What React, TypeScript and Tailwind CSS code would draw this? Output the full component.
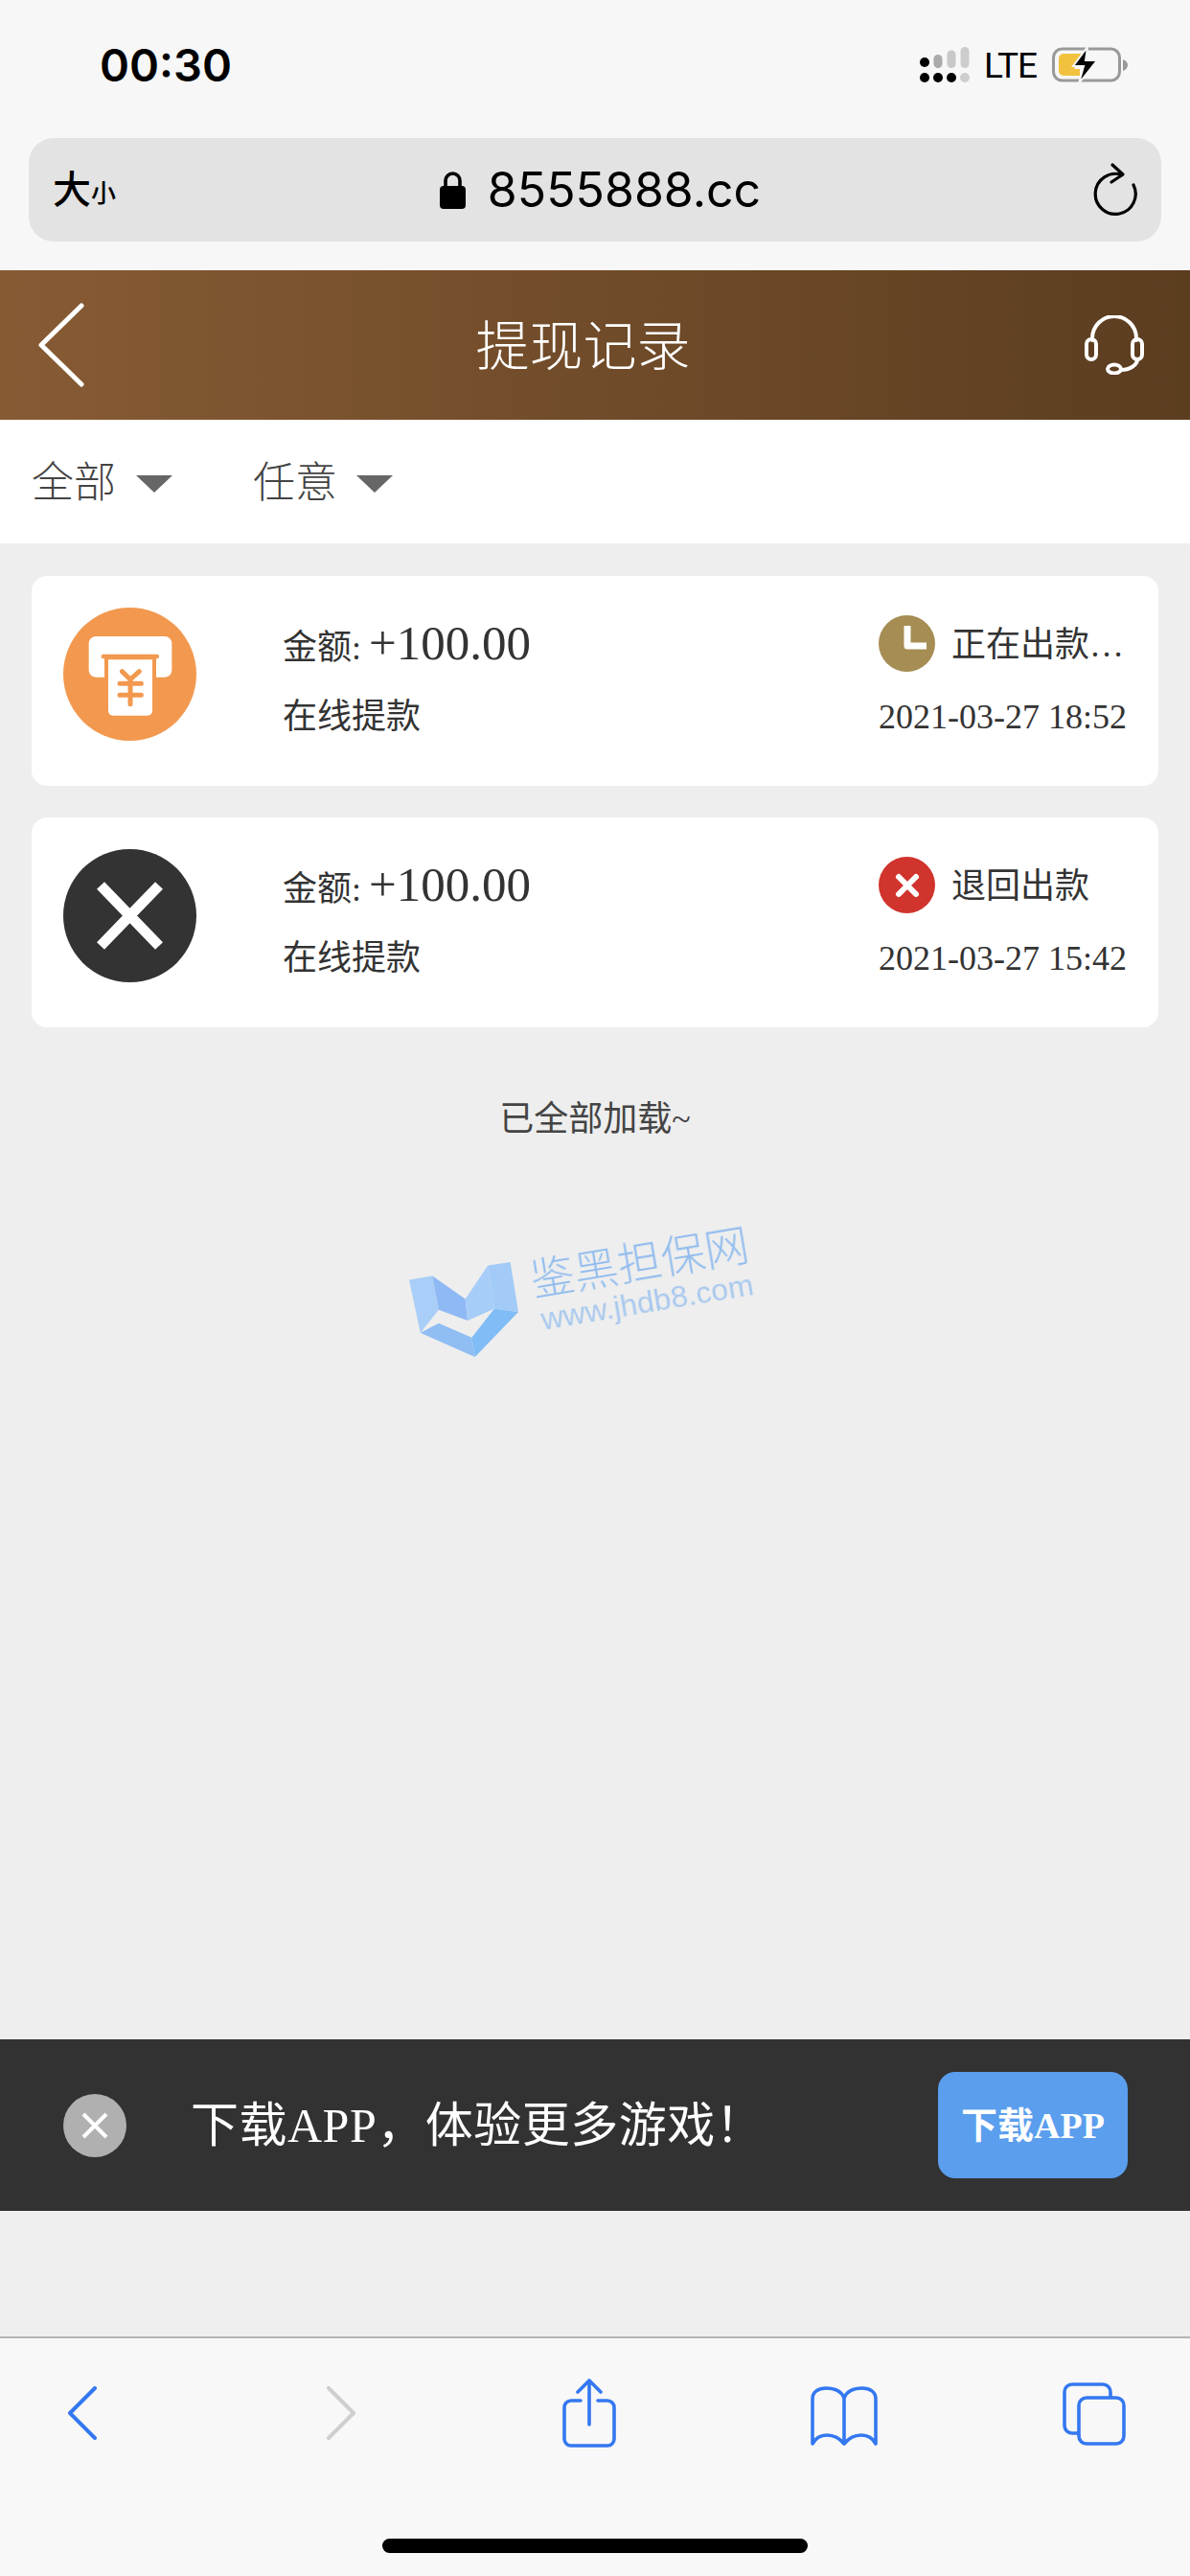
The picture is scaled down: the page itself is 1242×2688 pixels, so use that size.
const SERIF = "font-['Liberation_Serif','Noto_Sans_CJK_SC',serif]";

function SignalIcon() {
    return (
        <svg width="52" height="38" viewBox="0 0 52 38" className="block">
            <circle cx="5" cy="16" r="5" fill="#000" />
            <rect x="14.5" y="8" width="9" height="14" rx="4.5" fill="#aaa" />
            <rect x="28.5" y="3.5" width="9" height="18.5" rx="4.5" fill="#c8c8c8" />
            <rect x="42.5" y="0" width="9" height="22" rx="4.5" fill="#cdcdcd" />
            <circle cx="5" cy="32" r="5" fill="#000" />
            <circle cx="19" cy="32" r="5" fill="#000" />
            <circle cx="33" cy="32" r="5" fill="#000" />
            <circle cx="47" cy="32" r="5" fill="#cdcdcd" />
        </svg>
    );
}

function BatteryIcon() {
    return (
        <svg width="80" height="38" viewBox="0 0 80 38" className="block">
            <rect x="1.5" y="2" width="69" height="33" rx="9" fill="none" stroke="#999" strokeWidth="3" />
            <path d="M7 12a5 5 0 0 1 5-5h19v4l-8 12h6v7H12a5 5 0 0 1-5-5z" fill="#f2c23e" />
            <path d="M74 13c3 1 5 3 5 6s-2 5-5 6z" fill="#999" />
            <path d="M37 0 22 20h11l-5 18 19-24H35z" fill="#000" stroke="#f7f7f7" strokeWidth="2" />
        </svg>
    );
}

function LockIcon() {
    return (
        <svg width="27" height="39" viewBox="0 0 27 39" className="block shrink-0">
            <path d="M6 17V9.5a7.5 7.5 0 0 1 15 0V17" fill="none" stroke="#000" strokeWidth="3.6" />
            <rect x="0" y="15" width="27" height="24" rx="4" fill="#000" />
        </svg>
    );
}

function ReloadIcon() {
    return (
        <svg width="48" height="58" viewBox="0 0 48 58" fill="none" stroke="#000" strokeWidth="3.2" strokeLinecap="round" strokeLinejoin="round" className="block">
            <path d="M31 13.5A21 21 0 1 0 43 24" />
            <path d="M21 3 32 13 20 21" />
        </svg>
    );
}

function HeadsetIcon() {
    return (
        <svg width="62" height="62" viewBox="0 0 62 62" fill="none" stroke="#fff" strokeWidth="4" strokeLinecap="round" className="block">
            <path d="M8 26V24a23 23 0 0 1 46 0v2" />
            <rect x="2" y="25" width="10" height="21" rx="5" />
            <rect x="50" y="25" width="10" height="21" rx="5" />
            <path d="M55 46c0 6-8 11-17 11" />
            <ellipse cx="31" cy="56" rx="7" ry="4.5" />
        </svg>
    );
}

function Caret() {
    return <div className="w-0 h-0 border-l-[19px] border-r-[19px] border-t-[18px] border-l-transparent border-r-transparent border-t-[#666] mt-[5px]" />;
}

function AtmIcon() {
    return (
        <svg width="139" height="139" viewBox="78 72 417 417" className="block shrink-0 self-start mt-[33px]">
            <circle cx="286.5" cy="280.5" r="208.5" fill="#f2994f" />
            <rect x="158" y="162" width="260" height="128" rx="22" fill="#fff" />
            <rect x="207" y="226" width="162" height="80" fill="#f2994f" />
            <rect x="197" y="218" width="181" height="14" rx="6" fill="#f2994f" />
            <path d="M219 235h138v160a15 15 0 0 1-15 15H234a15 15 0 0 1-15-15z" fill="#fff" />
            <path d="M262 272l26 25 28-25M255 310h67M255 346h67M288 297v77" fill="none" stroke="#f2994f" strokeWidth="15" strokeLinecap="round" strokeLinejoin="round" />
        </svg>
    );
}

function FailIcon() {
    return (
        <svg width="139" height="139" viewBox="0 0 139 139" className="block shrink-0 self-start mt-[33px]">
            <circle cx="69.5" cy="69.5" r="69.5" fill="#333" />
            <path d="M39 38l61 63M100 38l-61 63" stroke="#fff" strokeWidth="11" />
        </svg>
    );
}

function ClockIcon() {
    return (
        <svg width="59" height="59" viewBox="0 0 59 59" className="block shrink-0 -mt-[3px]">
            <circle cx="29.5" cy="29.5" r="29.5" fill="#a58d54" />
            <path d="M30 11v21h20" fill="none" stroke="#fff" strokeWidth="7" strokeLinejoin="round" />
        </svg>
    );
}

function RedXIcon() {
    return (
        <svg width="59" height="59" viewBox="0 0 59 59" className="block shrink-0 -mt-[3px]">
            <circle cx="29.5" cy="29.5" r="29.5" fill="#d0342c" />
            <path d="M21 21l18 18M39 21 21 39" stroke="#fff" strokeWidth="6" strokeLinecap="round" />
        </svg>
    );
}

function WatermarkLogo() {
    return (
        <svg width="114" height="99" viewBox="140 230 340 295" className="block">
            <path d="M140 285 212 272 232 378 175 450z" fill="#a9cef7" />
            <path d="M212 272 315 345 322 412 232 378z" fill="#8fb9f5" />
            <path d="M315 345 385 240 405 375 322 412z" fill="#a6cdf8" />
            <path d="M385 240 455 230 480 385 405 375z" fill="#a2cbf7" />
            <path d="M480 385 345 525 335 465 405 375z" fill="#80bcf5" />
            <path d="M175 450 232 420 335 465 345 525z" fill="#8fbdf4" />
        </svg>
    );
}

interface RecordProps {
    icon: React.ReactNode;
    statusIcon: React.ReactNode;
    status: string;
    time: string;
}

function RecordCard({ icon, statusIcon, status, time }: RecordProps) {
    return (
        <div className="h-[219px] bg-white rounded-[16px] flex items-center pl-[33px] pr-[35px] text-[#333]">
            {icon}
            <div className="ml-[90px] flex-1">
                <div className="h-[60px] flex items-center text-[36px] leading-none whitespace-pre">
                    <span className="mt-[5px]">金额: </span>
                    <span className="text-[51px] ml-[-1px] -mt-[3px]">+100.00</span>
                </div>
                <div className="h-[60px] mt-[15px] flex items-center text-[36px] leading-none">在线提款</div>
            </div>
            <div className="w-[257px]">
                <div className="h-[60px] flex items-center text-[36px] leading-none">
                    {statusIcon}
                    <span className="ml-[17px] whitespace-nowrap">{status}</span>
                </div>
                <div className="h-[60px] mt-[15px] flex items-center text-[36px] leading-none whitespace-nowrap">{time}</div>
            </div>
        </div>
    );
}

function ToolbarIcons() {
    return (
        <div className="flex items-start pt-[42px] h-[114px]">
            <div className="ml-[46px] w-[80px] h-[72px] flex items-center justify-center">
                <svg width="32" height="56" viewBox="0 0 32 56" fill="none" stroke="#3478f0" strokeWidth="4" strokeLinecap="round" strokeLinejoin="round">
                    <path d="M29 2 3 28l26 26" />
                </svg>
            </div>
            <div className="ml-[190px] w-[80px] h-[72px] flex items-center justify-center">
                <svg width="32" height="56" viewBox="0 0 32 56" fill="none" stroke="#cfcfcf" strokeWidth="4" strokeLinecap="round" strokeLinejoin="round">
                    <path d="M3 2l26 26L3 54" />
                </svg>
            </div>
            <div className="ml-[179px] w-[80px] h-[72px] flex items-center justify-center">
                <svg width="56" height="72" viewBox="0 0 56 72" fill="none" stroke="#3478f0" strokeWidth="3.6" strokeLinecap="round" strokeLinejoin="round">
                    <path d="M19 23H9a7 7 0 0 0-7 7v33a7 7 0 0 0 7 7h38a7 7 0 0 0 7-7V30a7 7 0 0 0-7-7H37" />
                    <path d="M28 48V2M16 14 28 2l12 12" />
                </svg>
            </div>
            <div className="ml-[186px] w-[80px] h-[72px] flex items-center justify-center">
                <svg width="70" height="62" viewBox="0 0 70 62" fill="none" stroke="#3478f0" strokeWidth="3.6" strokeLinejoin="round" className="mt-[6px]">
                    <path d="M35 12C32 5 25 2 16 2 8 2 2 6 2 13v47c4-7 9-9 15-9s13 3 18 9c5-6 12-9 18-9s11 2 15 9V13c0-7-6-11-14-11-9 0-16 3-19 10z" />
                    <path d="M35 12v48" />
                </svg>
            </div>
            <div className="ml-[181px] w-[80px] h-[72px] flex items-center justify-center">
                <svg width="66" height="66" viewBox="0 0 66 66" fill="none" stroke="#3478f0" strokeWidth="3.6" strokeLinejoin="round" className="mt-[2px]">
                    <path d="M50 16v-6a8 8 0 0 0-8-8H10a8 8 0 0 0-8 8v35a8 8 0 0 0 8 8h6" />
                    <rect x="17" y="16" width="47" height="48" rx="8" />
                </svg>
            </div>
        </div>
    );
}

export default function App() {
    return (
        <div className={`relative w-[1242px] h-[2688px] overflow-hidden flex flex-col bg-[#eeeeee] ${SERIF}`}>
            {/* safari chrome */}
            <div className="h-[282px] shrink-0 bg-[#f7f7f7] font-['Inter','Noto_Sans_CJK_SC',sans-serif] text-black">
                <div className="h-[144px] flex items-start pt-[45px]">
                    <div className="ml-[104px] text-[47px] leading-[46px] font-semibold">00:30</div>
                    <div className="ml-auto mr-[64px] flex items-center mt-[4px]">
                        <SignalIcon />
                        <span className="ml-[15px] w-[54px] font-['Roboto',sans-serif] text-[37px] leading-none tracking-[-1px] whitespace-nowrap">LTE</span>
                        <div className="ml-[17px]"><BatteryIcon /></div>
                    </div>
                </div>
                <div className="mx-[30px] h-[108px] rounded-[26px] bg-[#e3e3e3] flex items-center pl-[25px] pr-[24px]">
                    <span className="text-[40px] leading-none font-medium">大</span>
                    <span className="text-[26px] leading-none font-medium mt-[8px]">小</span>
                    <div className="flex-1 flex items-center justify-center pr-[8px]">
                        <LockIcon />
                        <span className="ml-[23px] text-[50px] leading-none">8555888.cc</span>
                    </div>
                    <ReloadIcon />
                </div>
            </div>

            {/* title */}
            <div className="h-[156px] shrink-0 flex items-center justify-between pl-[38px] pr-[48px] bg-linear-to-r from-[#875b34] to-[#5b3d20] text-white">
                <svg width="52" height="88" viewBox="0 0 52 88" fill="none" stroke="#fff" strokeWidth="5" strokeLinecap="round" strokeLinejoin="round" className="block">
                    <path d="M47 3 5 44l42 41" />
                </svg>
                <div className="font-['Noto_Sans_CJK_SC',sans-serif] font-light text-[56px] leading-none ml-[-5px] -mt-[6px]">提现记录</div>
                <HeadsetIcon />
            </div>

            {/* filters */}
            <div className="h-[129px] shrink-0 bg-white flex items-center pl-[33px] text-[#444] font-['Noto_Sans_CJK_SC',sans-serif] font-light text-[44px] leading-none">
                <span className="-mt-[6px]">全部</span>
                <div className="ml-[21px]"><Caret /></div>
                <span className="ml-[84px] -mt-[6px]">任意</span>
                <div className="ml-[20px]"><Caret /></div>
            </div>

            {/* records */}
            <div className="flex-1 px-[33px] pt-[34px]">
                <div className="flex flex-col gap-[33px]">
                    <RecordCard icon={<AtmIcon />} statusIcon={<ClockIcon />} status="正在出款…" time="2021-03-27 18:52" />
                    <RecordCard icon={<FailIcon />} statusIcon={<RedXIcon />} status="退回出款" time="2021-03-27 15:42" />
                </div>
                <div className="mt-[74px] text-center text-[36px] leading-[44px] text-[#444]">已全部加载~</div>
            </div>

            {/* watermark */}
            <div className="absolute left-[427px] top-[1317px] blur-[0.6px]"><WatermarkLogo /></div>
            <div className="absolute left-[550px] top-[1288px] w-[240px] -rotate-[9.5deg] text-center font-['Noto_Sans_CJK_SC',sans-serif] blur-[0.4px]">
                <div className="text-[46px] leading-[50px] font-light text-[#93bdee] whitespace-nowrap">鉴黑担保网</div>
                <div className="ml-[2px] mt-[4px] text-[32px] leading-[34px] text-[#a9c9ee] font-['Liberation_Sans',sans-serif] whitespace-nowrap">www.jhdb8.com</div>
            </div>

            {/* download banner */}
            <div className="h-[179px] shrink-0 bg-[#323232] flex items-center text-white">
                <div className="ml-[66px] w-[66px] h-[66px] rounded-full bg-[#b0b0b0] flex items-center justify-center">
                    <svg width="28" height="28" viewBox="0 0 28 28" stroke="#fff" strokeWidth="4" className="block">
                        <path d="M2 2l24 24M26 2 2 26" />
                    </svg>
                </div>
                <div className="ml-[67px] text-[50px] leading-none tracking-[0.5px] whitespace-nowrap">下载APP，体验更多游戏！</div>
                <div className="ml-auto mr-[65px] w-[198px] h-[111px] rounded-[18px] bg-[#5a9eed] flex items-center justify-center text-[38px] leading-none font-bold whitespace-nowrap">下载APP</div>
            </div>

            <div className="h-[131px] shrink-0 bg-[#efefef]" />

            {/* safari toolbar */}
            <div className="h-[250px] shrink-0 bg-[#f8f8f8] border-t-2 border-[#b5b5b5]">
                <ToolbarIcons />
                <div className="mx-auto mt-[95px] w-[444px] h-[15px] rounded-full bg-black" />
            </div>
        </div>
    );
}
